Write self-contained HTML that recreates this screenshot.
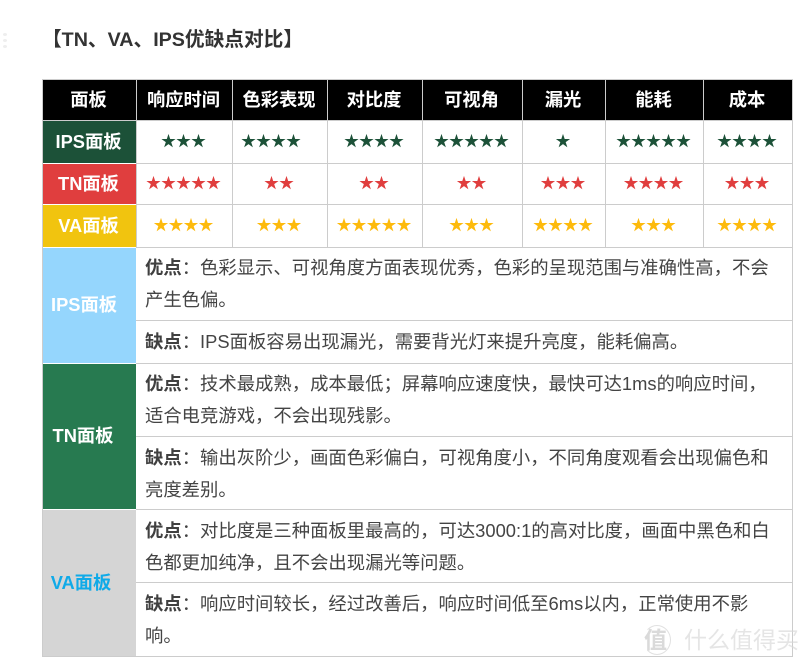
<!DOCTYPE html>
<html lang="zh">
<head>
<meta charset="utf-8">
<style>
html,body{margin:0;padding:0;background:#fff;}
body{width:809px;height:666px;overflow:hidden;position:relative;font-family:"Liberation Sans","Noto Sans CJK SC",sans-serif;}
.c{position:absolute;display:flex;align-items:center;justify-content:center;white-space:nowrap;box-sizing:border-box;}
.l{position:absolute;background:#ccc;}
.h{background:#000;color:#fff;font-weight:700;font-size:18.3px;padding:0 2px 2px 0;}
.r{color:#fff;font-weight:700;font-size:18.3px;padding:0 2px 2px 0;}
.s{font-size:15px;font-family:"Noto Sans CJK SC",sans-serif;padding:0 2px 4px 0;}
.g{color:#1c5138;}.d{color:#e03e3e;}.y{color:#fdba0c;}
.t{position:absolute;left:145px;width:640px;font-size:18.35px;line-height:31.5px;color:#444;white-space:nowrap;}
.t b{color:#404040;}
.dot{position:absolute;width:4px;height:3px;background:#eee;border-radius:50%;}
</style>
</head>
<body>
<div class="dot" style="left:3px;top:33px"></div><div class="dot" style="left:3px;top:39px"></div><div class="dot" style="left:3px;top:45px"></div>

<div style="position:absolute;left:42px;top:28px;font-size:19.7px;line-height:24px;font-weight:700;color:#333;white-space:nowrap;">【TN、VA、IPS优缺点对比】</div>

<!-- header -->
<div class="c h" style="left:43px;top:80px;width:93px;height:40px">面板</div>
<div class="c h" style="left:137px;top:80px;width:95px;height:40px">响应时间</div>
<div class="c h" style="left:233px;top:80px;width:94px;height:40px">色彩表现</div>
<div class="c h" style="left:328px;top:80px;width:94px;height:40px">对比度</div>
<div class="c h" style="left:423px;top:80px;width:99px;height:40px">可视角</div>
<div class="c h" style="left:523px;top:80px;width:82px;height:40px">漏光</div>
<div class="c h" style="left:606px;top:80px;width:97px;height:40px">能耗</div>
<div class="c h" style="left:704px;top:80px;width:88px;height:40px">成本</div>

<!-- row labels -->
<div class="c r" style="left:43px;top:121px;width:93px;height:42px;background:#1c5138">IPS面板</div>
<div class="c r" style="left:43px;top:164px;width:93px;height:40px;background:#e03e3e">TN面板</div>
<div class="c r" style="left:43px;top:205px;width:93px;height:42px;background:#f1c40f">VA面板</div>
<div class="c r" style="left:43px;top:248px;width:93px;height:115px;background:#95d6fd;padding:0 11px 4px 0">IPS面板</div>
<div class="c r" style="left:43px;top:364px;width:93px;height:145px;background:#277a50;padding:0 13px 4px 0">TN面板</div>
<div class="c r" style="left:43px;top:510px;width:93px;height:146px;background:#d5d5d5;color:#10aae8;padding:0 17px 2px 0">VA面板</div>

<!-- stars IPS -->
<div class="c s g" style="left:137px;top:121px;width:95px;height:42px">★★★</div>
<div class="c s g" style="left:233px;top:121px;width:94px;height:42px;padding-right:18px">★★★★</div>
<div class="c s g" style="left:328px;top:121px;width:94px;height:42px">★★★★</div>
<div class="c s g" style="left:423px;top:121px;width:99px;height:42px">★★★★★</div>
<div class="c s g" style="left:523px;top:121px;width:82px;height:42px">★</div>
<div class="c s g" style="left:606px;top:121px;width:97px;height:42px">★★★★★</div>
<div class="c s g" style="left:704px;top:121px;width:88px;height:42px">★★★★</div>
<!-- stars TN -->
<div class="c s d" style="left:137px;top:164px;width:95px;height:40px">★★★★★</div>
<div class="c s d" style="left:233px;top:164px;width:94px;height:40px">★★</div>
<div class="c s d" style="left:328px;top:164px;width:94px;height:40px">★★</div>
<div class="c s d" style="left:423px;top:164px;width:99px;height:40px">★★</div>
<div class="c s d" style="left:523px;top:164px;width:82px;height:40px">★★★</div>
<div class="c s d" style="left:606px;top:164px;width:97px;height:40px">★★★★</div>
<div class="c s d" style="left:704px;top:164px;width:88px;height:40px">★★★</div>
<!-- stars VA -->
<div class="c s y" style="left:137px;top:205px;width:95px;height:42px">★★★★</div>
<div class="c s y" style="left:233px;top:205px;width:94px;height:42px">★★★</div>
<div class="c s y" style="left:328px;top:205px;width:94px;height:42px">★★★★★</div>
<div class="c s y" style="left:423px;top:205px;width:99px;height:42px">★★★</div>
<div class="c s y" style="left:523px;top:205px;width:82px;height:42px">★★★★</div>
<div class="c s y" style="left:606px;top:205px;width:97px;height:42px">★★★</div>
<div class="c s y" style="left:704px;top:205px;width:88px;height:42px">★★★★</div>

<!-- lines -->
<div class="l" style="left:42px;top:79px;width:751px;height:1px"></div>
<div class="l" style="left:42px;top:79px;width:1px;height:578px"></div>
<div class="l" style="left:792px;top:79px;width:1px;height:578px"></div>
<div class="l" style="left:42px;top:120px;width:751px;height:1px"></div>
<div class="l" style="left:136px;top:163px;width:657px;height:1px"></div>
<div class="l" style="left:136px;top:204px;width:657px;height:1px"></div>
<div class="l" style="left:136px;top:247px;width:657px;height:1px"></div>
<div class="l" style="left:136px;top:320px;width:657px;height:1px"></div>
<div class="l" style="left:136px;top:363px;width:657px;height:1px"></div>
<div class="l" style="left:136px;top:436px;width:657px;height:1px"></div>
<div class="l" style="left:136px;top:509px;width:657px;height:1px"></div>
<div class="l" style="left:136px;top:582px;width:657px;height:1px"></div>
<div class="l" style="left:42px;top:656px;width:751px;height:1px"></div>
<div class="l" style="left:136px;top:79px;width:1px;height:168px"></div>
<div class="l" style="left:232px;top:79px;width:1px;height:168px"></div>
<div class="l" style="left:327px;top:79px;width:1px;height:168px"></div>
<div class="l" style="left:422px;top:79px;width:1px;height:168px"></div>
<div class="l" style="left:522px;top:79px;width:1px;height:168px"></div>
<div class="l" style="left:605px;top:79px;width:1px;height:168px"></div>
<div class="l" style="left:703px;top:79px;width:1px;height:168px"></div>

<!-- descriptions -->
<div class="t" style="top:252px"><b>优点</b>：色彩显示、可视角度方面表现优秀，色彩的呈现范围与准确性高，不会<br>产生色偏。</div>
<div class="t" style="top:326px"><b>缺点</b>：IPS面板容易出现漏光，需要背光灯来提升亮度，能耗偏高。</div>
<div class="t" style="top:368px"><b>优点</b>：技术最成熟，成本最低；屏幕响应速度快，最快可达1ms的响应时间，<br>适合电竞游戏，不会出现残影。</div>
<div class="t" style="top:442px"><b>缺点</b>：输出灰阶少，画面色彩偏白，可视角度小，不同角度观看会出现偏色和<br>亮度差别。</div>
<div class="t" style="top:515px"><b>优点</b>：对比度是三种面板里最高的，可达3000:1的高对比度，画面中黑色和白<br>色都更加纯净，且不会出现漏光等问题。</div>
<div class="t" style="top:588px"><b>缺点</b>：响应时间较长，经过改善后，响应时间低至6ms以内，正常使用不影<br>响。</div>

<!-- watermark -->
<div style="position:absolute;left:643px;top:625px;width:28px;height:30px;border:1px solid rgba(205,205,205,.6);border-left-color:transparent;border-radius:50%;box-sizing:border-box;"></div>
<div style="position:absolute;left:644px;top:627px;font-size:23px;line-height:26px;color:rgba(205,205,205,.75);font-weight:700;">值</div>
<div style="position:absolute;left:684px;top:627px;font-size:23px;line-height:26px;color:rgba(215,215,215,.65);white-space:nowrap;">什么值得买</div>
</body>
</html>
